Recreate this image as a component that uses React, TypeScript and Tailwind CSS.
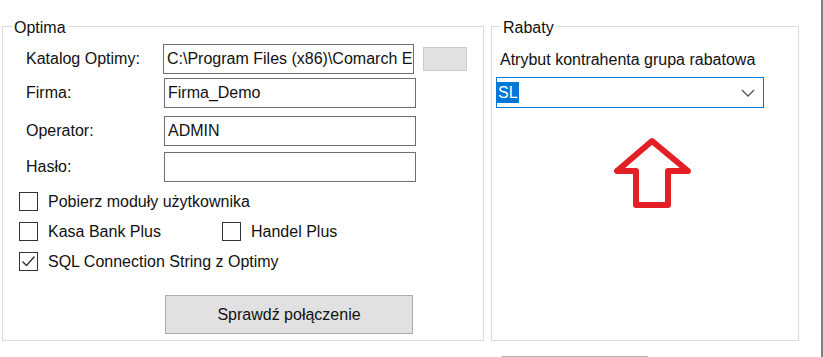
import React from "react";

const font = "font-['Liberation_Sans',Arial,sans-serif] text-[16px] text-[#111]";

function GroupLabel({ children }: { children: React.ReactNode }) {
  return (
    <span className="absolute -top-[8px] left-[9px] bg-white px-[2px] leading-[18px]">
      {children}
    </span>
  );
}

function Field({
  label,
  value,
  labelW,
  inputW,
  mt,
  extra,
}: {
  label: string;
  value?: string;
  labelW: string;
  inputW: string;
  mt: string;
  extra?: React.ReactNode;
}) {
  return (
    <div className={`flex items-center ml-[23px] ${mt}`}>
      <div className={`${labelW} leading-[18px]`}>{label}</div>
      <div
        className={`${inputW} h-[30px] border border-[#6e6e6e] bg-white pl-[3px] flex items-center overflow-hidden whitespace-nowrap leading-[18px]`}
      >
        {value}
      </div>
      {extra}
    </div>
  );
}

function Check({ checked, label }: { checked?: boolean; label: string }) {
  return (
    <div className="flex items-center">
      <div className="w-[19px] h-[19px] border border-[#333] bg-white flex items-center justify-center">
        {checked && (
          <svg width="17" height="17" viewBox="0 0 17 17">
            <path d="M2.5 8.5 L6.5 12.5 L14.5 3.5" fill="none" stroke="#333" strokeWidth="1.4" />
          </svg>
        )}
      </div>
      <span className="ml-[10px] leading-[18px]">{label}</span>
    </div>
  );
}

export default function App() {
  return (
    <div className={`flex w-[823px] h-[357px] overflow-hidden bg-white ${font}`}>
      <div className="flex-1 pl-[2px] pt-[26px]">
        <div className="flex">
          {/* Optima */}
          <div className="relative w-[482px] h-[315px] border border-[#dcdcdc]">
            <GroupLabel>Optima</GroupLabel>
            <Field
              label="Katalog Optimy:"
              value="C:\Program Files (x86)\Comarch E"
              labelW="w-[137px]"
              inputW="w-[251px]"
              mt="mt-[17px]"
              extra={
                <div className="ml-[9px] w-[44px] h-[24px] bg-[#e1e1e1] border border-[#cccccc]" />
              }
            />
            <Field label="Firma:" value="Firma_Demo" labelW="w-[138px]" inputW="w-[252px]" mt="mt-[4px]" />
            <Field label="Operator:" value="ADMIN" labelW="w-[138px]" inputW="w-[252px]" mt="mt-[8px]" />
            <Field label="Hasło:" labelW="w-[138px]" inputW="w-[252px]" mt="mt-[6px]" />

            <div className="ml-[16px] mt-[10px]">
              <Check label="Pobierz moduły użytkownika" />
            </div>
            <div className="ml-[16px] mt-[11px] flex">
              <div className="w-[203px]">
                <Check label="Kasa Bank Plus" />
              </div>
              <Check label="Handel Plus" />
            </div>
            <div className="ml-[16px] mt-[11px]">
              <Check checked label="SQL Connection String z Optimy" />
            </div>

            <div className="ml-[162px] mt-[24px] w-[248px] h-[39px] bg-[#e1e1e1] border border-[#adadad] flex items-center justify-center leading-[18px]">
              Sprawdź połączenie
            </div>
          </div>

          {/* Rabaty */}
          <div className="relative ml-[7px] w-[308px] h-[315px] border border-[#dcdcdc]">
            <GroupLabel>Rabaty</GroupLabel>
            <div className="ml-[8px] mt-[24px] leading-[18px]">Atrybut kontrahenta grupa rabatowa</div>
            <div className="ml-[4px] mt-[8px] w-[268px] h-[31px] border border-[#0078d7] bg-white flex items-center">
              <span className="bg-[#0078d7] text-white leading-[21px] px-[1px]">SL</span>
              <svg className="ml-auto mr-[8px]" width="14" height="8" viewBox="0 0 14 8">
                <path d="M1 1 L7 7 L13 1" fill="none" stroke="#555" strokeWidth="1.3" />
              </svg>
            </div>
            <svg className="ml-[120px] mt-[27px]" width="82" height="76" viewBox="0 0 82 76">
              <path
                d="M40 6 L5 36 L24 36 L24 70 L56 70 L56 36 L76 36 Z"
                fill="none"
                stroke="#e31e24"
                strokeWidth="6"
                strokeLinejoin="round"
              />
            </svg>
          </div>
        </div>

        <div className="ml-[500px] mt-[15px] w-[146px] h-[30px] border-t border-[#adadad] bg-[#e1e1e1]" />
      </div>
      <div className="w-[2px] bg-[#808080]" />
    </div>
  );
}
